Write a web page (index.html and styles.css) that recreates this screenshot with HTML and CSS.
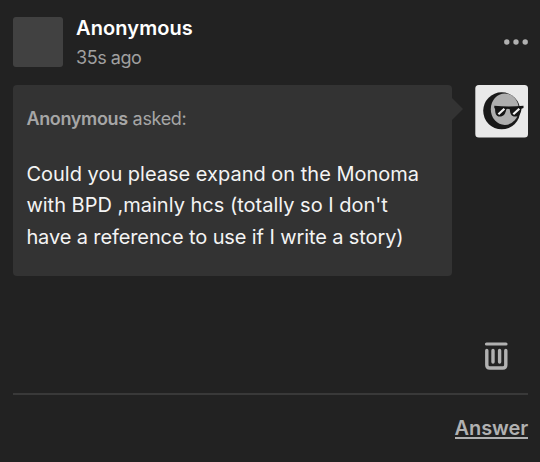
FILE: index.html
```html
<!DOCTYPE html>
<html lang="en">
<head>
    <meta charset="UTF-8">
    <meta name="viewport" content="width=device-width, initial-scale=1.0">
    <title>Ask</title>
    <link rel="stylesheet" href="styles.css">
</head>
<body>
    <div class="post">
        <header class="post-header">
            <div class="asker-avatar"></div>
            <div class="asker">
                <div class="asker-name">Anonymous</div>
                <div class="asker-time">35s ago</div>
            </div>
            <svg class="more" width="24" height="6" viewBox="0 0 24 6">
                <circle cx="2.8" cy="3" r="2.7"/>
                <circle cx="12" cy="3" r="2.7"/>
                <circle cx="21.2" cy="3" r="2.7"/>
            </svg>
        </header>

        <div class="ask-row">
            <div class="ask">
                <p class="ask-title"><b>Anonymous</b> <span>asked:</span></p>
                <p class="ask-text">
                    <span class="line line-1">Could you please expand on the Monoma</span>
                    <span class="line line-2">with BPD ,mainly hcs (totally so I don't</span>
                    <span class="line line-3">have a reference to use if I write a story)</span>
                </p>
            </div>
            <svg class="avatar" width="53" height="53" viewBox="0 0 53 53">
                <rect x=".3" width="52.7" height="52.5" rx="3.5" fill="#e9e9e9"/>
                <!-- moon -->
                <circle cx="26.7" cy="25.8" r="18.5" fill="#191919"/>
                <ellipse cx="29.8" cy="24.2" rx="14" ry="15.8" fill="#aeaeae"/>
                <!-- sunglasses -->
                <path d="M19.3 20.700q14.500 1.600 29.200 0v2.300l-2 .8c-.5 5-2.500 7.800-6.300 7.800-3.800 0-5.200-2.800-5.400-7.300l-2-.5-1.500.5c-.8 4.700-2.800 7.300-6.500 7.300-3.800 0-4.700-3-4.700-7.800l-.8-.8z" fill="#151515"/>
                <path d="M23.400 29.300l6-5.600M38.300 29.300l6-5.600" stroke="#f2f2f2" stroke-width="2.200"/>
            </svg>
        </div>

        <div class="actions">
            <svg class="trash" width="24" height="28" viewBox="0 0 24 28" fill="none">
                <path d="M2.5 2h19.5" stroke-width="3.2"/>
                <path d="M2.8 8.4v14.6q0 3 3 3h13q3 0 3-3V8.4M9 8.4v11.6M15.6 8.4v11.6" stroke-width="3.4"/>
            </svg>
        </div>

        <footer class="post-footer">
            <a class="answer">Answer</a>
        </footer>
    </div>
</body>
</html>
```
FILE: styles.css
```css
* {
    box-sizing: border-box;
}

body {
    margin: 0;
    background: #222;
    color: #fff;
    font-family: Inter, "Liberation Sans", sans-serif;
}

.post {
    height: 462px;
    padding: 17px 12px 0 13px;
}

.post-header {
    display: flex;
    height: 68px;
}

.asker-avatar {
    width: 50px;
    height: 50px;
    border-radius: 3px;
    background: #414141;
}

.asker {
    flex: 1;
    padding-left: 13px;
}

.asker-name {
    margin-top: -3px;
    font-size: 20px;
    font-weight: 600;
    line-height: 28px;
    letter-spacing: 0.1px;
}

.asker-time {
    margin-top: 2px;
    font-size: 18px;
    line-height: 28px;
    letter-spacing: -0.45px;
    color: #a0a0a0;
}

.more {
    margin-top: 22px;
    fill: #b1b1b1;
}

.ask-row {
    display: flex;
    justify-content: space-between;
}

.ask {
    position: relative;
    width: 439px;
    height: 191px;
    padding: 21px 13px 0 13.4px;
    border-radius: 4px;
    background: #333;
}

.ask::after {
    content: "";
    position: absolute;
    left: 100%;
    top: 13px;
    border: 11px solid transparent;
    border-left-color: #333;
    border-right: 0;
}

.ask-title {
    margin: 0;
    font-size: 18px;
    line-height: 26px;
    letter-spacing: -0.33px;
    color: #a6a6a6;
}

.ask-title b {
    font-weight: 600;
}

.ask-text {
    margin: 26.5px 0 0;
    font-size: 20px;
    line-height: 31.5px;
    color: #f4f4f4;
}

.line {
    display: block;
    white-space: nowrap;
}

.line-3 {
    letter-spacing: -0.11px;
}

.actions {
    display: flex;
    justify-content: flex-end;
    height: 117px;
    padding: 66px 20px 0 0;
}

.trash {
    stroke: #b1b1b1;
    stroke-linecap: round;
}

.post-footer {
    padding-top: 24px;
    border-top: 2px solid #393939;
    text-align: right;
}

.answer {
    display: inline-block;
    border-bottom: 2px solid #b1b1b1;
    font-size: 20px;
    font-weight: 600;
    line-height: 18px;
    letter-spacing: -0.1px;
    color: #b1b1b1;
}
```
